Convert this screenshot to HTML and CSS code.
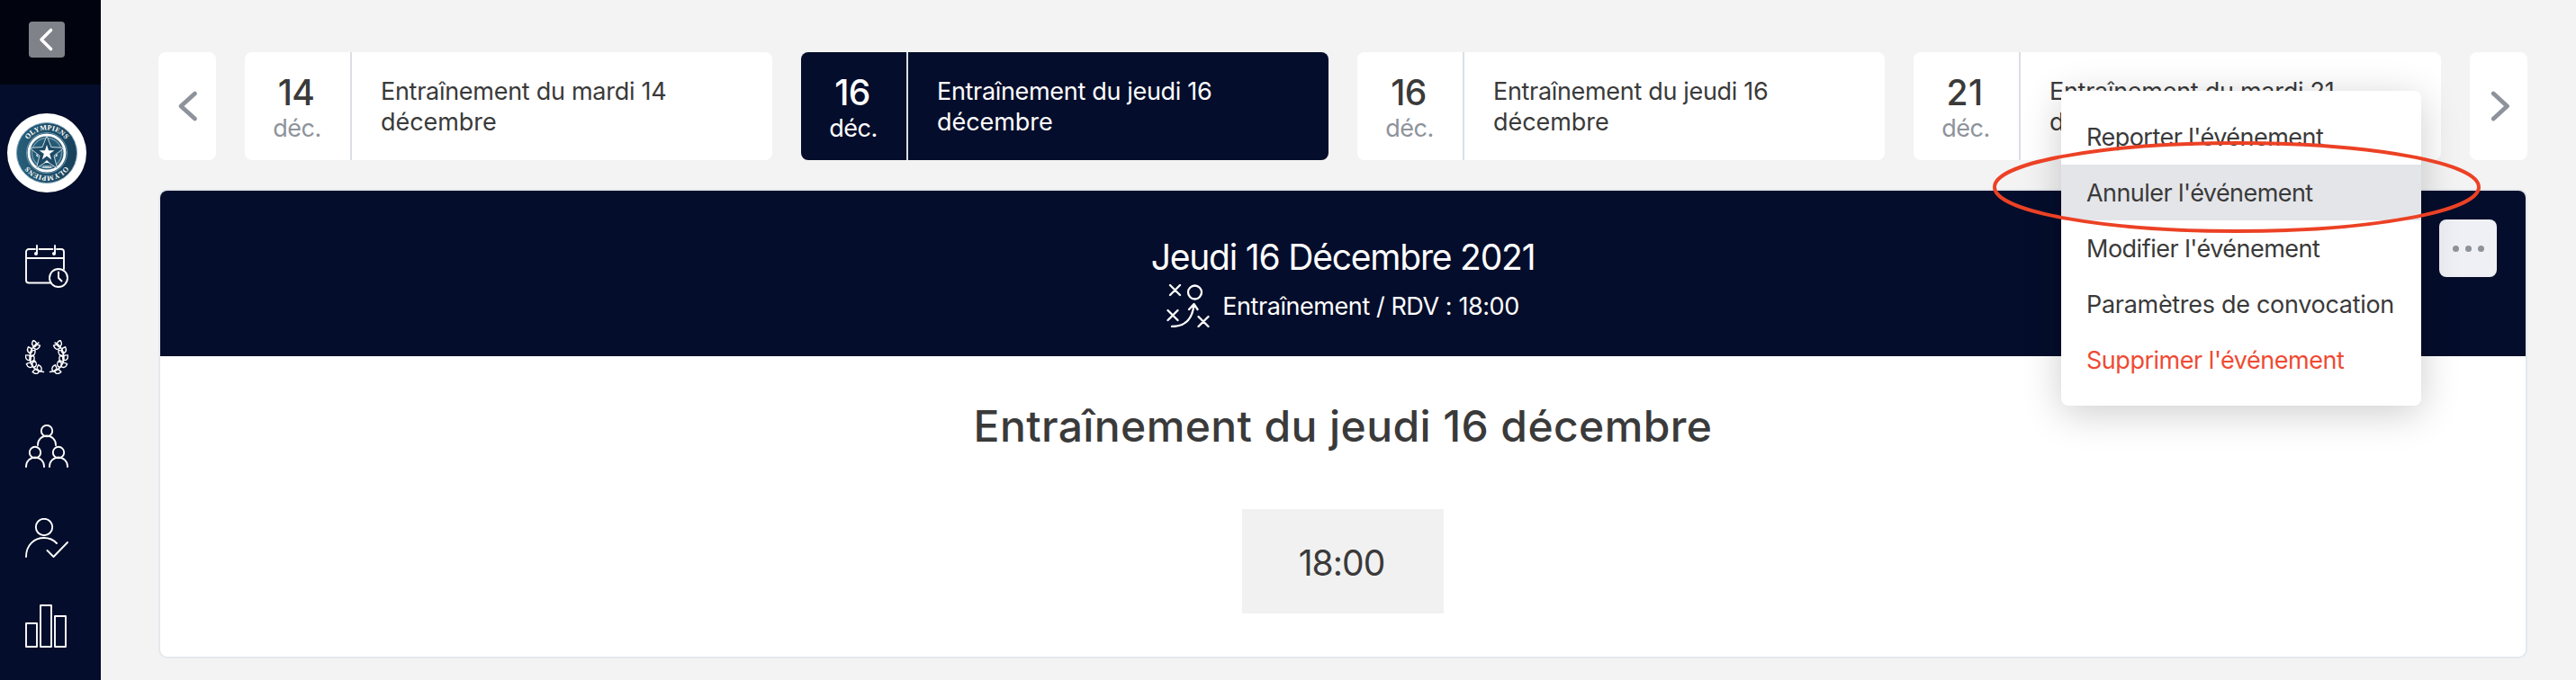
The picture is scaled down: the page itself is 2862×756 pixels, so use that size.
FILE: index.html
```html
<!DOCTYPE html>
<html lang="fr">
<head>
<meta charset="utf-8">
<title>Entraînement du jeudi 16 décembre</title>
<link rel="stylesheet" href="styles.css">
</head>
<body>
<div class="app">
  <nav class="sidebar">
    <div class="sidebar-top">
      <button class="collapse" aria-label="Réduire">
        <svg width="40" height="40" viewBox="0 0 40 40"><path d="M24.500 9.500 14 20l10.500 10.500" fill="none" stroke="#fff" stroke-width="3.600" stroke-linecap="round" stroke-linejoin="round"/></svg>
      </button>
    </div>
    <div class="sidebar-items">
      <svg class="logo" width="88" height="88" viewBox="0 0 88 88">
        <defs>
          <linearGradient id="ring"><stop offset="0" stop-color="#285f79"/><stop offset="1" stop-color="#173f59"/></linearGradient>
          <path id="arcTop" d="M18.500 44a25.500 25.500 0 0 1 51 0"/>
          <path id="arcBottom" d="M69.500 44a25.500 25.500 0 0 1-51 0"/>
        </defs>
        <circle cx="44" cy="44" r="44" fill="#fff"/>
        <circle cx="44" cy="44" r="33.500" fill="url(#ring)" stroke="#7fa5bd" stroke-width="1"/>
        <circle cx="44" cy="44" r="20" fill="#255a74" stroke="#fff" stroke-width="2.800"/>
        <circle cx="44" cy="44" r="22.500" fill="none" stroke="#6f9ab5" stroke-width="1"/>
        <circle cx="44" cy="44" r="16.500" fill="none" stroke="#6b94aa" stroke-width="1.500"/>
        <path d="M44 25l4.900 12.500 14.100.9-11 8.800 3.600 13.800L44 53.500 32.400 61 36 47.200l-11-8.800 14.100-.9z" fill="#1d4b66" stroke="#c9dae4" stroke-width="1"/>
        <path d="M44 35l2 6.200h6.400l-5.200 3.900 2 6.300-5.200-3.900-5.200 3.900 2-6.300-5.200-3.900H42z" fill="#fff"/>
        <path d="M44 52l3 3h-6zM33 45l2 4-3-2zM55 45l-2 4 3-2z" fill="#fff"/>
        <text class="logo-year" x="44" y="60.500" text-anchor="middle">2002</text>
        <text class="logo-name"><textPath href="#arcTop" startOffset="50%" text-anchor="middle">OLYMPIENS</textPath></text>
        <text class="logo-name"><textPath href="#arcBottom" startOffset="50%" text-anchor="middle">OLYMPIENS</textPath></text>
      </svg>
      <svg class="icon icon-calendar" width="48" height="48" viewBox="0 0 48 48">
        <path d="M11 5H4a3 3 0 0 0-3 3v31.500a3 3 0 0 0 3 3h24M15.500 5h15M35 5h5a3 3 0 0 1 3 3v19M1 15h42M13 1v8M33 1v8"/>
        <circle class="dot" cx="12" cy="10" r="2"/><circle class="dot" cx="32" cy="10" r="2"/>
        <circle cx="37" cy="37" r="10"/><path d="M37 30.500V37l3.500 3.500"/>
      </svg>
      <svg class="icon icon-laurel" width="48" height="38" viewBox="0 0 48 38">
        <defs>
          <path id="leaf" d="M0 0C-3.200-1.500-3.500-4.500 0-7.500 3.500-4.500 3.200-1.500 0 0z"/>
          <g id="branch">
            <path d="M15 3C4 8 3 22 8 29c3 4 7 6 12.500 6.500"/>
            <use href="#leaf" transform="translate(11 7.500) rotate(-15)"/>
            <use href="#leaf" transform="translate(9.500 9) rotate(68)"/>
            <use href="#leaf" transform="translate(6.500 14.500) rotate(-25)"/>
            <use href="#leaf" transform="translate(6 17) rotate(42)"/>
            <use href="#leaf" transform="translate(6 22) rotate(-48)"/>
            <use href="#leaf" transform="translate(6.200 24) rotate(25)"/>
            <use href="#leaf" transform="translate(8.500 29) rotate(-72)"/>
            <use href="#leaf" transform="translate(9.500 30.500) rotate(8)"/>
            <use href="#leaf" transform="translate(15.500 34.500) rotate(-98)"/>
            <use href="#leaf" transform="translate(16.500 35) rotate(-14)"/>
          </g>
        </defs>
        <use href="#branch"/>
        <use href="#branch" transform="translate(48 0) scale(-1 1)"/>
      </svg>
      <svg class="icon icon-team" width="48" height="48" viewBox="0 0 48 48">
        <circle cx="24" cy="7" r="6.200"/><path d="M14 23v-.5a10 10 0 0 1 20 0v.5"/>
        <circle cx="11" cy="31" r="6.200"/><path d="M1 47v-.5a10 10 0 0 1 20 0v.5"/>
        <circle cx="37" cy="31" r="6.200"/><path d="M27 47v-.5a10 10 0 0 1 20 0v.5"/>
      </svg>
      <svg class="icon icon-user" width="48" height="44" viewBox="0 0 48 44">
        <circle cx="21" cy="10" r="9.200"/>
        <path d="M1 43C1 30 10 22 21 22c5.500 0 10.500 2.200 14 6M24.500 36l7 7L47 27"/>
      </svg>
      <svg class="icon icon-chart" width="48" height="48" viewBox="0 0 48 48">
        <path d="M1 21h12v26H1zM17 1h12v46H17zM33 13h12v34H33z"/>
      </svg>
    </div>
  </nav>

  <main class="content">
    <div class="carousel">
      <button class="arrow prev" aria-label="Précédent">
        <svg width="24" height="36" viewBox="0 0 24 36"><path d="M20.500 4 5 18l15.500 14" /></svg>
      </button>
      <div class="events">
        <article class="event">
          <div class="date"><span class="day">14</span><span class="month">déc.</span></div>
          <p class="name mardi">Entraînement du mardi 14<br><span class="wrap">décembre</span></p>
        </article>
        <article class="event active">
          <div class="date"><span class="day">16</span><span class="month">déc.</span></div>
          <p class="name">Entraînement du jeudi 16<br><span class="wrap">décembre</span></p>
        </article>
        <article class="event">
          <div class="date"><span class="day">16</span><span class="month">déc.</span></div>
          <p class="name">Entraînement du jeudi 16<br><span class="wrap">décembre</span></p>
        </article>
        <article class="event">
          <div class="date"><span class="day late">21</span><span class="month">déc.</span></div>
          <p class="name mardi">Entraînement du mardi 21<br><span class="wrap">décembre</span></p>
        </article>
      </div>
      <button class="arrow next" aria-label="Suivant">
        <svg width="24" height="36" viewBox="0 0 24 36"><path d="M6.300 4 21.500 18 6.300 32"/></svg>
      </button>
    </div>

    <section class="panel">
      <header class="panel-head">
        <div class="panel-date">Jeudi 16 Décembre 2021</div>
        <div class="panel-info">
          <svg width="48" height="48" viewBox="0 0 48 48">
            <path d="M4 1l11 11M15 1L4 12M1.500 29l11 11M12.500 29l-11 11M35.500 36l11 11M46.500 36l-11 11M6 47c15 0 23-9 24.500-24.500M25 28l5.500-6 4 6"/>
            <circle cx="31.500" cy="9" r="7.500"/>
          </svg>
          <span>Entraînement / RDV : 18:00</span>
        </div>
        <button class="more" aria-label="Options"><i></i><i></i><i></i></button>
        <ul class="menu">
          <li class="reporter">Reporter l'événement</li>
          <li class="annuler">Annuler l'événement</li>
          <li class="modifier">Modifier l'événement</li>
          <li class="parametres">Paramètres de convocation</li>
          <li class="supprimer">Supprimer l'événement</li>
        </ul>
        <svg class="highlight" width="544" height="104" viewBox="0 0 544 104"><ellipse cx="272" cy="52" rx="269" ry="49"/></svg>
      </header>
      <div class="panel-body">
        <h1>Entraînement du jeudi 16 décembre</h1>
        <div class="time">18:00</div>
      </div>
    </section>
  </main>
</div>
</body>
</html>
```
FILE: styles.css
```css
* { box-sizing: border-box; }

body {
  margin: 0;
  background: #f3f3f3;
  color: #3a3a3a;
  font-family: Inter, "Liberation Sans", sans-serif;
  font-size: 27px;
}

button { border: 0; padding: 0; font: inherit; }

.app {
  display: flex;
  height: 756px;
  overflow: hidden;
}

/* Sidebar */
.sidebar {
  display: flex;
  flex-direction: column;
  flex: none;
  width: 112px;
  background: #040d2b;
}

.sidebar-top {
  flex: none;
  height: 94px;
  padding: 24px 0 0 32px;
  background: #01040f;
}

.collapse {
  display: block;
  width: 40px;
  height: 40px;
  border-radius: 4px;
  background: #808289;
}

.collapse svg { display: block; }

.sidebar-items {
  display: flex;
  flex-direction: column;
  align-items: center;
  padding: 32px 8px 0 0;
}

.sidebar-items svg { display: block; flex: none; }

.logo-name {
  fill: #fff;
  font: bold 8px "Liberation Serif", serif;
  letter-spacing: 0.1px;
}

.logo-year {
  fill: #fff;
  font: bold 5px "Liberation Serif", serif;
}

.icon {
  fill: none;
  stroke: #fff;
  stroke-width: 1.9;
  stroke-linecap: round;
  stroke-linejoin: round;
}

.icon .dot { fill: #fff; stroke: none; }
.icon-calendar { margin-top: 58px; }
.icon-laurel { margin-top: 58px; stroke-width: 1.4; }
.icon-team { margin-top: 56px; }
.icon-user { margin-top: 56px; }
.icon-chart { margin-top: 52px; }

/* Event carousel */
.content {
  flex: 1;
  min-width: 0;
  padding: 58px 54px 0 64px;
}

.carousel {
  display: flex;
  gap: 32px;
  height: 120px;
}

.arrow {
  display: flex;
  align-items: center;
  justify-content: center;
  flex: none;
  width: 64px;
  border-radius: 8px;
  background: #fff;
}

.arrow path {
  fill: none;
  stroke: #8e939b;
  stroke-width: 4.8;
  stroke-linecap: round;
  stroke-linejoin: round;
}

.events {
  display: grid;
  grid-template-columns: repeat(4, 1fr);
  gap: 32px;
  flex: 1;
}

.event {
  display: flex;
  border-radius: 8px;
  background: #fff;
}

.date {
  display: flex;
  flex-direction: column;
  align-items: center;
  width: 119px;
  padding: 23px 3px 0 0;
  border-right: 2px solid #dadee6;
}

.day {
  font-size: 39px;
  font-weight: 500;
  line-height: 44px;
  letter-spacing: -0.6px;
}

.day.late { letter-spacing: 0.3px; }

.month {
  padding-left: 2px;
  line-height: 36px;
  letter-spacing: -0.5px;
  color: #8e939b;
}

.name {
  margin: 0;
  padding: 27px 0 0 32px;
  line-height: 34px;
  letter-spacing: -0.32px;
  white-space: nowrap;
}

.name.mardi { letter-spacing: -0.28px; }
.name .wrap { letter-spacing: -0.05px; }

.event.active { background: #040d2b; color: #fff; }
.event.active .month { color: #fff; }

/* Event panel */
.panel {
  height: 522px;
  margin-top: 32px;
  border: 2px solid #e4e8ee;
  border-radius: 10px;
  background: #fff;
}

.panel-head {
  position: relative;
  height: 184px;
  padding-top: 47px;
  border-radius: 8px 8px 0 0;
  background: #040d2b;
  color: #fff;
}

.panel-date {
  font-size: 39px;
  line-height: 54px;
  letter-spacing: -1.2px;
  text-align: center;
}

.panel-info {
  display: flex;
  justify-content: center;
  gap: 14px;
  margin-top: 3px;
  line-height: 50px;
  letter-spacing: -0.43px;
}

.panel-info svg {
  fill: none;
  stroke: #fff;
  stroke-width: 2.3;
  stroke-linecap: round;
  stroke-linejoin: round;
}

.more {
  position: absolute;
  top: 32px;
  right: 32px;
  display: flex;
  align-items: center;
  justify-content: center;
  gap: 7px;
  width: 64px;
  height: 64px;
  border-radius: 8px;
  background: #eef0f5;
}

.more i {
  width: 7px;
  height: 7px;
  border-radius: 50%;
  background: #8e939b;
}

.menu {
  position: absolute;
  top: -111px;
  right: 116px;
  width: 400px;
  height: 350px;
  margin: 0;
  padding: 20px 0;
  border-radius: 8px;
  background: #fff;
  box-shadow: 0 8px 44px rgba(0, 0, 0, 0.2);
  color: #3a3a3a;
  list-style: none;
}

.menu li {
  height: 62px;
  padding-left: 28px;
  line-height: 63px;
  letter-spacing: -0.5px;
  white-space: nowrap;
}

.menu .annuler { background: #e4e5e9; letter-spacing: -0.56px; }
.menu .reporter { letter-spacing: -0.53px; }
.menu .parametres { letter-spacing: -0.3px; }
.menu .supprimer { color: #ef4a33; letter-spacing: -0.48px; }

.highlight {
  position: absolute;
  top: -56px;
  right: 49px;
  fill: none;
  stroke: #ec4125;
  stroke-width: 4;
}

.panel-body {
  display: flex;
  flex-direction: column;
  align-items: center;
  padding-top: 48px;
}

h1 {
  margin: 0;
  font-size: 48px;
  font-weight: 500;
  line-height: 60px;
  letter-spacing: 0.4px;
}

.time {
  width: 224px;
  height: 116px;
  margin-top: 62px;
  padding: 2px 3px 0 0;
  background: #f1f1f1;
  font-size: 39px;
  line-height: 116px;
  letter-spacing: -0.96px;
  text-align: center;
}
```
